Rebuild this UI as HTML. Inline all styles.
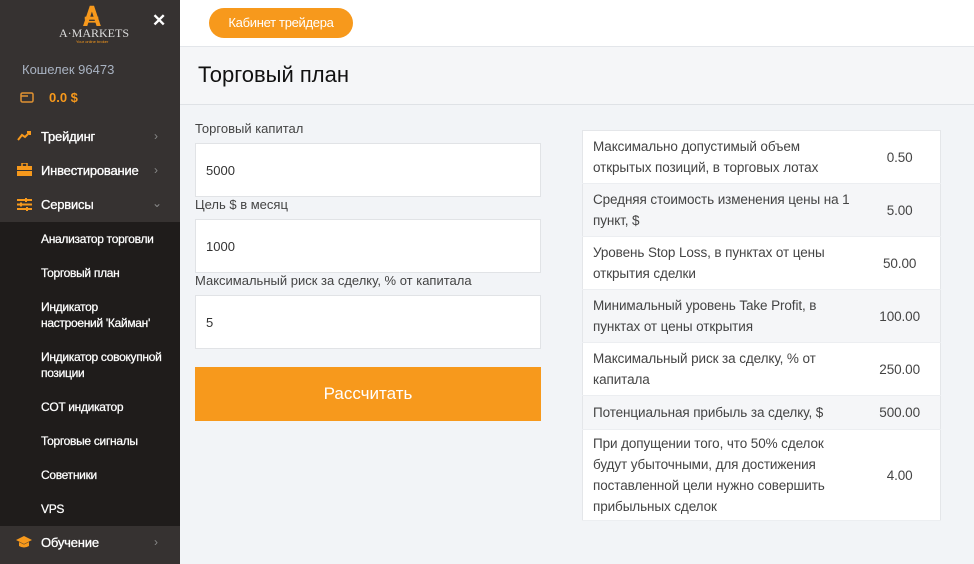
<!DOCTYPE html>
<html><head><meta charset="utf-8"><style>
*{box-sizing:border-box;margin:0;padding:0}
body{width:974px;height:564px;overflow:hidden;font-family:"Liberation Sans",sans-serif;background:#f2f4f7;position:relative}
.sb{position:absolute;left:0;top:0;width:180px;height:564px;background:#363231;color:#fff}
.sub{position:absolute;left:0;top:222px;width:180px;height:304px;background:#1f1c1b}
.t{position:absolute;font-size:13px;white-space:nowrap}
.mi{position:absolute;left:41px;font-size:13px;color:#fff;letter-spacing:-0.2px;-webkit-text-stroke:0.3px #fff}
.si{position:absolute;left:41px;font-size:12px;color:#fff;line-height:16px;letter-spacing:-0.3px;-webkit-text-stroke:0.25px #fff}
.ch{position:absolute;left:154px;color:#888;font-size:12px}
.top{position:absolute;left:180px;top:0;right:0;height:47px;background:#fff;border-bottom:1px solid #e3e6ea}
.btn{position:absolute;left:29px;top:8px;width:144px;height:30px;border-radius:15px;background:#f7991c;color:#fff;font-size:13px;text-align:center;line-height:30px;letter-spacing:-0.3px}
.hd{position:absolute;left:180px;top:47px;right:0;height:58px;background:#f5f6f8;border-bottom:1px solid #dfe2e6}
.hd span{position:absolute;left:18px;top:15px;font-size:22px;color:#111}
.lbl{position:absolute;left:195px;font-size:13px;color:#444}
.inp{position:absolute;left:195px;width:346px;height:54px;background:#fff;border:1px solid #e1e3e6;font-size:13px;color:#333;padding:19px 0 0 10px}
.calc{position:absolute;left:195px;top:367px;width:346px;height:54px;background:#f7991c;color:#fff;font-size:17px;text-align:center;line-height:54px}
table{position:absolute;left:582px;top:130px;width:359px;border-collapse:collapse;background:#fff;border:1px solid #e4e6e9;font-size:13.5px;color:#444;letter-spacing:-0.1px;table-layout:fixed}
td{border-bottom:1px solid #eceef1;padding:0 8px 0 10px;line-height:21px;width:280px}
td.v{text-align:center;width:77px;padding:0 4px 0 0}
tr:nth-child(even){background:#f5f6f8}
</style></head><body>
<div class="sb">
<div class="sub"></div>
<svg style="position:absolute;left:80px;top:4px" width="23" height="22" viewBox="0 0 26 26"><path d="M3 26 L11 2 L16 2 L24 26 L19 26 L13.5 9 L8 26Z" fill="#f7991c"/><rect x="5" y="15" width="16" height="3.5" fill="#f7991c"/><rect x="6" y="20" width="16" height="2" fill="#f7991c"/></svg>
<div class="t" style="left:59px;top:26px;font-family:'Liberation Serif',serif;font-size:12px;color:#ddd">A·MARKETS</div>
<div class="t" style="left:76px;top:39px;font-size:4px;color:#f7991c">Your online broker</div>
<div class="t" style="left:152px;top:11px;font-size:17px;font-weight:bold">✕</div>
<div class="t" style="left:22px;top:62px;color:#a9b3c2;font-size:13px">Кошелек 96473</div>
<svg style="position:absolute;left:20px;top:91px" width="14" height="12"><rect x="1" y="2" width="12" height="9" rx="1.5" fill="none" stroke="#e09232" stroke-width="1.5"/><path d="M1 5h7" stroke="#e09232" stroke-width="1.5"/></svg>
<div class="t" style="left:49px;top:90px;color:#f7991c;font-weight:bold;font-size:13px">0.0 $</div>
<svg style="position:absolute;left:17px;top:131px" width="15" height="10"><path d="M1 9 L5 4 L8 6 L13 1 M10 1h3v3" stroke="#f7991c" stroke-width="2" fill="none"/></svg>
<div class="mi" style="top:129px">Трейдинг</div><div class="ch" style="top:129px">›</div>
<svg style="position:absolute;left:17px;top:163px" width="15" height="13"><rect x="0" y="3" width="15" height="10" fill="#f7991c"/><rect x="5" y="0" width="5" height="4" fill="none" stroke="#f7991c" stroke-width="1.5"/><rect x="0" y="7" width="15" height="1" fill="#363231"/></svg>
<div class="mi" style="top:163px">Инвестирование</div><div class="ch" style="top:163px">›</div>
<svg style="position:absolute;left:17px;top:198px" width="15" height="13"><path d="M0 2h15M0 6.5h15M0 11h15" stroke="#f7991c" stroke-width="2"/><path d="M9 0v4M4 4.5v4M10 9v4" stroke="#f7991c" stroke-width="2"/></svg>
<div class="mi" style="top:197px">Сервисы</div><div class="ch" style="top:196px;left:152px">⌄</div>
<div class="si" style="top:231px">Анализатор торговли</div>
<div class="si" style="top:265px">Торговый план</div>
<div class="si" style="top:299px">Индикатор<br>настроений 'Кайман'</div>
<div class="si" style="top:349px">Индикатор совокупной<br>позиции</div>
<div class="si" style="top:399px">COT индикатор</div>
<div class="si" style="top:433px">Торговые сигналы</div>
<div class="si" style="top:467px">Советники</div>
<div class="si" style="top:501px">VPS</div>
<svg style="position:absolute;left:16px;top:536px" width="16" height="12"><path d="M0 4 L8 0 L16 4 L8 8Z" fill="#f7991c"/><path d="M3 6v4 q5 3 10 0v-4 l-5 2.5z" fill="#f7991c"/></svg>
<div class="mi" style="top:535px">Обучение</div><div class="ch" style="top:535px">›</div>
</div>
<div class="top"><div class="btn">Кабинет трейдера</div></div>
<div class="hd"><span>Торговый план</span></div>
<div class="lbl" style="top:121px">Торговый капитал</div>
<div class="inp" style="top:143px">5000</div>
<div class="lbl" style="top:197px">Цель $ в месяц</div>
<div class="inp" style="top:219px">1000</div>
<div class="lbl" style="top:273px">Максимальный риск за сделку, % от капитала</div>
<div class="inp" style="top:295px">5</div>
<div class="calc">Рассчитать</div>
<table>
<tr style="height:53px"><td>Максимально допустимый объем открытых позиций, в торговых лотах</td><td class="v">0.50</td></tr>
<tr style="height:53px"><td>Средняя стоимость изменения цены на 1 пункт, $</td><td class="v">5.00</td></tr>
<tr style="height:53px"><td>Уровень Stop Loss, в пунктах от цены открытия сделки</td><td class="v">50.00</td></tr>
<tr style="height:53px"><td>Минимальный уровень Take Profit, в пунктах от цены открытия</td><td class="v">100.00</td></tr>
<tr style="height:53px"><td>Максимальный риск за сделку, % от капитала</td><td class="v">250.00</td></tr>
<tr style="height:34px"><td>Потенциальная прибыль за сделку, $</td><td class="v">500.00</td></tr>
<tr style="height:91px"><td>При допущении того, что 50% сделок будут убыточными, для достижения поставленной цели нужно совершить прибыльных сделок</td><td class="v">4.00</td></tr>
</table>
</body></html>
